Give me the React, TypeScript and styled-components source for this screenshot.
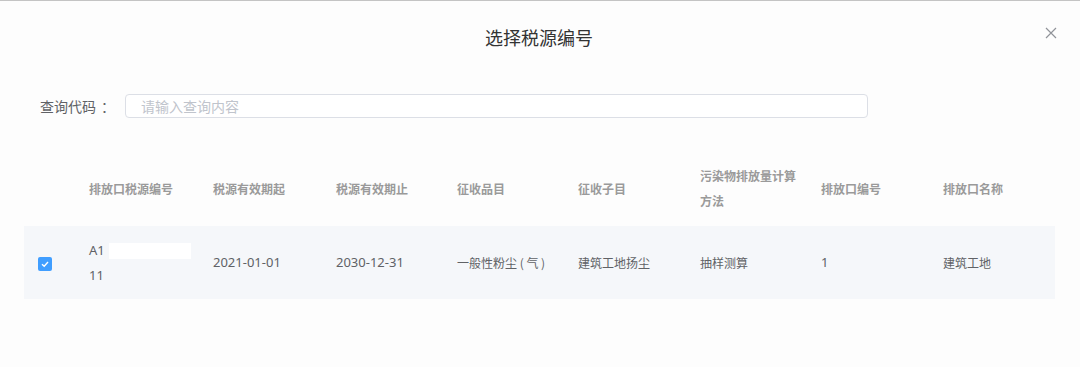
import styled, { createGlobalStyle } from "styled-components";

const GlobalStyle = createGlobalStyle`
  html, body {
    margin: 0;
    padding: 0;
    background: #fff;
    font-family: "Noto Sans CJK SC", "Noto Sans", sans-serif;
  }
`;

const columns = [
  "排放口税源编号",
  "税源有效期起",
  "税源有效期止",
  "征收品目",
  "征收子目",
  "污染物排放量计算方法",
  "排放口编号",
  "排放口名称",
];

const row = {
  start: "2021-01-01",
  end: "2030-12-31",
  item: "一般性粉尘 ( 气 )",
  subItem: "建筑工地扬尘",
  method: "抽样测算",
  outletNo: "1",
  outletName: "建筑工地",
};

const App = () => {
  return (
    <>
      <GlobalStyle />
      <Dialog>
        <Header>
          <Title>选择税源编号</Title>
          <Close aria-label="close">
            <svg width="12" height="12" viewBox="0 0 12 12">
              <path d="M1 1 L11 11 M11 1 L1 11" stroke="#909399" strokeWidth="1.2" fill="none" />
            </svg>
          </Close>
        </Header>

        <SearchRow>
          <Label>
            查询代码<Colon>：</Colon>
          </Label>
          <Input placeholder="请输入查询内容" />
        </SearchRow>

        <Table>
          <HeadRow>
            <Cell />
            {columns.map((c) => (
              <HeadCell key={c}>{c}</HeadCell>
            ))}
          </HeadRow>
          <BodyRow>
            <CheckCell>
              <Checkbox>
                <svg width="10" height="10" viewBox="0 0 10 10">
                  <path d="M2 5.2 L4.2 7.2 L8 3" stroke="#fff" strokeWidth="1.4" fill="none" />
                </svg>
              </Checkbox>
            </CheckCell>
            <BodyCell $num>
              <div>
                A1<Redact />
              </div>
              <div>11</div>
            </BodyCell>
            <BodyCell $num>{row.start}</BodyCell>
            <BodyCell $num>{row.end}</BodyCell>
            <BodyCell>{row.item}</BodyCell>
            <BodyCell>{row.subItem}</BodyCell>
            <BodyCell>{row.method}</BodyCell>
            <BodyCell $num>{row.outletNo}</BodyCell>
            <BodyCell>{row.outletName}</BodyCell>
          </BodyRow>
        </Table>
      </Dialog>
    </>
  );
};

export default App;

const Dialog = styled.div`
  width: 1080px;
  height: 367px;
  box-sizing: border-box;
  border-top: 1px solid #c4c4c4;
  background: #fdfdfd;
  overflow: hidden;
`;

const Header = styled.div`
  position: relative;
  height: 69px;
  display: flex;
  align-items: center;
  justify-content: center;
`;

const Title = styled.div`
  font-size: 18px;
  color: #333;
  padding-top: 2px;
  padding-right: 2px;
`;

const Close = styled.button`
  position: absolute;
  right: 23px;
  top: 26px;
  border: none;
  background: transparent;
  padding: 0;
  width: 12px;
  height: 12px;
  display: flex;
  cursor: pointer;
`;

const SearchRow = styled.div`
  display: flex;
  align-items: center;
  margin-top: 24px;
  padding-left: 40px;
`;

const Label = styled.span`
  width: 85px;
  font-size: 14px;
  color: #606266;
`;

const Colon = styled.span`
  display: inline-block;
  padding-left: 5px;
`;

const Input = styled.input`
  width: 743px;
  height: 24px;
  box-sizing: border-box;
  border: 1px solid #dcdfe6;
  border-radius: 4px;
  padding: 0 15px;
  font-size: 14px;
  font-family: inherit;
  color: #606266;
  background: #fff;
  outline: none;

  &::placeholder {
    color: #c0c4cc;
  }
`;

const Table = styled.div`
  margin: 32px 25px 0 24px;
  width: 1031px;
`;

const Grid = styled.div`
  display: grid;
  grid-template-columns: 55px 124px 123px 121px 121px 122px 121px 122px 1fr;
  align-items: center;
`;

const HeadRow = styled(Grid)`
  height: 76px;
`;

const BodyRow = styled(Grid)`
  height: 73px;
  background: #f5f7fa;
`;

const Cell = styled.div`
  padding: 0 10px;
  box-sizing: border-box;
  line-height: 25px;
`;

const HeadCell = styled(Cell)`
  font-size: 12px;
  font-weight: bold;
  color: #9a9a9a;
`;

const BodyCell = styled(Cell)<{ $num?: boolean }>`
  font-size: ${(p) => (p.$num ? "13px" : "12px")};
  font-family: ${(p) => (p.$num ? '"Noto Sans", "Noto Sans CJK SC", sans-serif' : "inherit")};
  color: #606266;
`;

const CheckCell = styled(Cell)`
  padding-left: 14px;
  display: flex;
  align-items: center;
`;

const Checkbox = styled.span`
  width: 14px;
  height: 14px;
  border-radius: 2px;
  background: #409eff;
  display: flex;
  align-items: center;
  justify-content: center;
  margin-top: 2px;
`;

const Redact = styled.span`
  display: inline-block;
  width: 82px;
  height: 16px;
  margin-left: 4px;
  background: #fff;
  vertical-align: middle;
`;
